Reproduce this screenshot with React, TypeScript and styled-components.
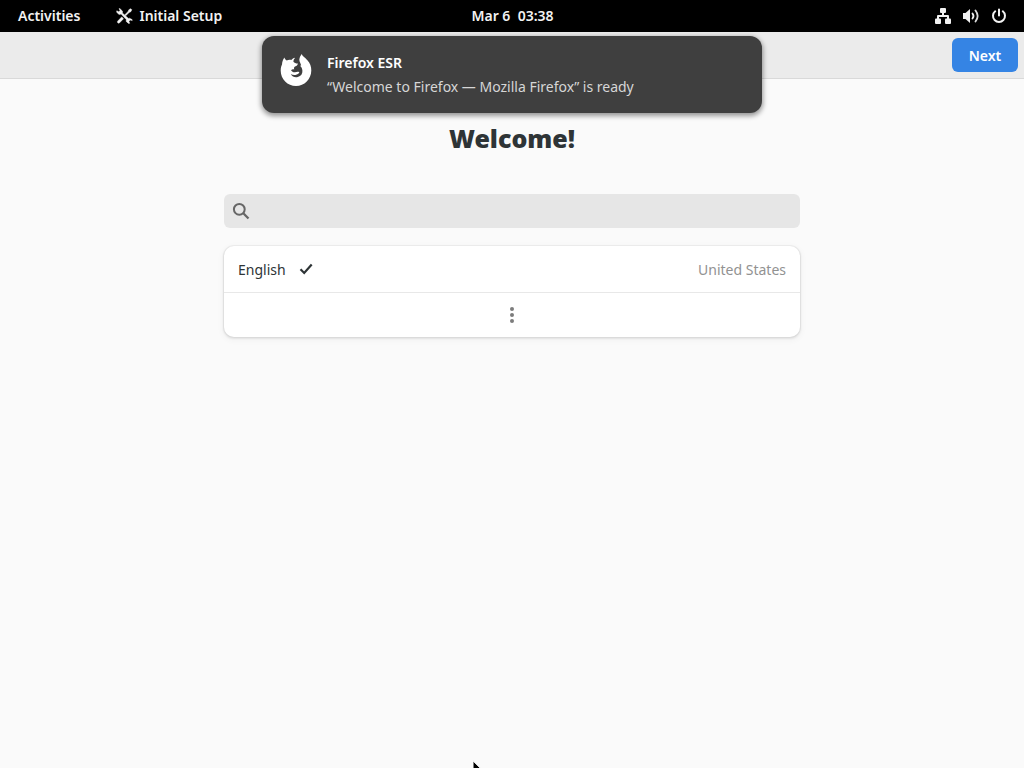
import React from "react";
import styled, { createGlobalStyle } from "styled-components";

const GlobalStyle = createGlobalStyle`
  *, *::before, *::after { box-sizing: border-box; }
  body {
    margin: 0;
    background: #fafafa;
    color: #2e3436;
    font-family: "Noto Sans", "Open Sans", sans-serif;
    font-size: 14px;
    line-height: 20px;
    overflow: hidden;
  }
  button, input { font: inherit; color: inherit; }
`;

const Desktop = styled.div`
  position: relative;
  min-height: 100vh;
  overflow: hidden;
`;

const TopBar = styled.nav`
  display: grid;
  grid-template-columns: 1fr auto 1fr;
  align-items: center;
  height: 32px;
  padding: 0 5px 0 6px;
  background: #000;
  color: #f2f2f2;
`;

const BarGroup = styled.div<{ $end?: boolean }>`
  display: flex;
  gap: 12px;
  justify-content: ${(p) => (p.$end ? "flex-end" : "flex-start")};
`;

const BarButton = styled.button<{ $gap?: number }>`
  display: flex;
  align-items: center;
  gap: ${(p) => p.$gap ?? 6}px;
  height: 32px;
  padding: 0 12px;
  border: 0;
  background: transparent;
  font-weight: 600;
  white-space: pre;
`;

const HeaderBar = styled.header`
  display: flex;
  justify-content: flex-end;
  align-items: center;
  height: 47px;
  padding: 0 6px;
  background: #ebebeb;
  border-bottom: 1px solid #d9d9d9;
`;

const NextButton = styled.button`
  width: 66px;
  height: 34px;
  padding: 2px 0 0;
  border: 0;
  border-radius: 6px;
  background: #3584e4;
  color: #fff;
  font-weight: 600;
`;

const Content = styled.main`
  display: flex;
  flex-direction: column;
  width: 100%;
  max-width: 600px;
  margin: 0 auto;
  padding: 40px 12px;
`;

const Title = styled.h1`
  margin: 0 0 36px;
  font-size: 25px;
  line-height: 39px;
  font-weight: 900;
  text-align: center;
`;

const SearchBox = styled.label`
  display: flex;
  align-items: center;
  gap: 8px;
  height: 34px;
  margin-bottom: 18px;
  padding: 0 8px;
  border-radius: 6px;
  background: #e6e6e6;
  color: #666;
`;

const SearchInput = styled.input`
  flex: 1;
  min-width: 0;
  border: 0;
  outline: 0;
  background: transparent;
`;

const LanguageList = styled.ul`
  margin: 0;
  padding: 0;
  list-style: none;
  border-radius: 10px;
  background: #fff;
  box-shadow: 0 0 0 1px rgba(0, 0, 0, 0.03), 0 1px 2px 1px rgba(0, 0, 0, 0.07),
    0 2px 6px 2px rgba(0, 0, 0, 0.03);
`;

const LanguageItem = styled.li`
  & + & { border-top: 1px solid #e8e8e8; }
`;

const RowButton = styled.button<{ $center?: boolean }>`
  display: flex;
  align-items: center;
  justify-content: ${(p) => (p.$center ? "center" : "flex-start")};
  gap: 12px;
  width: 100%;
  height: ${(p) => (p.$center ? 44 : 46)}px;
  padding: ${(p) => (p.$center ? "0 14px" : "2px 14px 0")};
  border: 0;
  background: transparent;
`;

const Country = styled.span`
  margin-left: auto;
  color: #929292;
`;

const Notification = styled.section`
  position: absolute;
  top: 36px;
  left: 50%;
  transform: translateX(-50%);
  display: flex;
  align-items: flex-start;
  gap: 15px;
  width: 500px;
  max-width: 100%;
  height: 77px;
  padding: 17px 18px;
  border-radius: 12px;
  background: #3f3f3f;
  color: #d6d6d6;
  box-shadow: 0 2px 5px 1px rgba(0, 0, 0, 0.4);
`;

const NotificationTitle = styled.h2`
  margin: 0 0 4px;
  font-size: 14px;
  line-height: 20px;
  font-weight: 600;
  color: #fff;
`;

const NotificationBody = styled.p`
  margin: 0;
`;

const Pointer = styled.svg`
  position: absolute;
  left: 472px;
  top: 760px;
`;

const ToolsIcon = () => (
  <svg width="17" height="16" viewBox="0 0 16 16" fill="currentColor" stroke="currentColor" strokeWidth=".5" aria-hidden="true">
    <path d="M3.2.4 5.9 3v2l6 5.400 1-.2 2.700 1.400.1 1-2-.6-1.300 1.400.8 1.900-1.100.1-2.400-2 .1-1.900L4.600 6.100l-2 .4L.2 4.300l.1-1.500 2 1L3.600 2.600 2.500.7z" />
    <path d="M14.200.7l1.100 1-1 2-1.700.8-3.400 3.300-1-.9 3.400-3.400.8-1.800z" />
    <path d="M5.200 8.900 7 10.700l-3.900 4.100c-1.200 1.200-3-.7-1.800-1.800z" />
  </svg>
);

const NetworkIcon = () => (
  <svg width="16" height="16" viewBox="0 0 16 16" fill="currentColor" aria-hidden="true">
    <rect x="5" y="0" width="6" height="5" rx="1" />
    <path d="M7 4.500h2V7h4a1 1 0 0 1 1 1v3h-2V9H4v2H2V8a1 1 0 0 1 1-1h4z" />
    <rect x="0" y="10.500" width="6" height="5.500" rx="1" />
    <rect x="10" y="10.500" width="6" height="5.500" rx="1" />
  </svg>
);

const VolumeIcon = () => (
  <svg width="16" height="16" viewBox="0 0 16 16" fill="none" stroke="currentColor" aria-hidden="true">
    <path d="M0 5h2.500L7 1v14l-4.500-4H0z" fill="currentColor" stroke="none" />
    <path d="M9.500 5.500q2 2.500 0 5" strokeWidth="1.800" strokeLinecap="round" />
    <path d="M12.500 2.500q4.300 5.500 0 11" strokeWidth="1.800" strokeLinecap="round" opacity=".9" />
  </svg>
);

const PowerIcon = () => (
  <svg width="16" height="16" viewBox="0 0 16 16" fill="none" stroke="currentColor" strokeWidth="2" strokeLinecap="round" aria-hidden="true">
    <path d="M8 1.500v6M4.200 3.300a6 6 0 1 0 7.600 0" />
  </svg>
);

const SearchIcon = () => (
  <svg width="18" height="18" viewBox="0 0 18 18" fill="none" stroke="currentColor" strokeWidth="2" aria-hidden="true">
    <circle cx="7.300" cy="7.300" r="5.400" />
    <path d="m11.300 11.300 5.200 5.200" strokeWidth="2.300" />
  </svg>
);

const CheckIcon = () => (
  <svg width="16" height="16" viewBox="0 0 16 16" fill="none" stroke="currentColor" strokeWidth="2.200" aria-hidden="true">
    <path d="m2.500 7.300 3.700 3.700L13.700 2.500" />
  </svg>
);

const MoreIcon = () => (
  <svg width="16" height="18" viewBox="0 0 16 18" fill="#7c7c7c" aria-hidden="true">
    <circle cx="8" cy="3" r="2" />
    <circle cx="8" cy="9" r="2" />
    <circle cx="8" cy="15" r="2" />
  </svg>
);

const FirefoxIcon = () => (
  <svg width="32" height="34" viewBox="0 0 32 34" fill="#fff" aria-hidden="true">
    <path d="M21.800 1c.9 2.800 3 3 5.600 6.200 2.700 3 4 6.300 3.900 10.200C31.200 26 24.400 33 16 33S.7 26.200.7 17.700c0-3.200.8-5 1.300-6.200.2-2.600.9-5 2.500-6.900.2 1.300.9 2.200 2.200 2.900 1.500-.7 3.300-.8 4.600-.4 1-1.200 2.300-2 3.800-2.300-1 1.100-1.700 2.500-1.700 4 1 1.200 2.300 1.700 4.500 1.800-.2 1.900-1.800 2.600-3.600 3.500-.4.900-.4 1.700-.1 2.500-1-.5-2.400-.3-3.200.8 1 .8 2 2 4 1.900 1.300-.1 2.600-1.300 4.400-.1-.6 1.400-2 2.400-4 2.700-1.600.3-3.200-.1-4.600-.9 1.500 2.800 4.200 3.600 7 2.900 3.300-.8 4.800-3.200 4.600-6.200-.1-2.200-1-3.700-2.500-5.200l1.300.3c-.3-2.300-1.700-3.500-1.900-6C19.600 4.200 20.500 2.500 21.800 1z" />
  </svg>
);

export default function App() {
  return (
    <Desktop>
      <GlobalStyle />
      <TopBar>
        <BarGroup>
          <BarButton type="button">Activities</BarButton>
          <BarButton type="button">
            <ToolsIcon />
            Initial Setup
          </BarButton>
        </BarGroup>
        <BarButton type="button">{"Mar 6  03:38"}</BarButton>
        <BarGroup $end>
          <BarButton type="button" $gap={12} aria-label="System menu">
            <NetworkIcon />
            <VolumeIcon />
            <PowerIcon />
          </BarButton>
        </BarGroup>
      </TopBar>
      <HeaderBar>
        <NextButton type="button">Next</NextButton>
      </HeaderBar>
      <Content>
        <Title>Welcome!</Title>
        <SearchBox>
          <SearchIcon />
          <SearchInput type="text" aria-label="Search languages" />
        </SearchBox>
        <LanguageList>
          <LanguageItem>
            <RowButton type="button">
              English
              <CheckIcon />
              <Country>United States</Country>
            </RowButton>
          </LanguageItem>
          <LanguageItem>
            <RowButton type="button" $center aria-label="More languages">
              <MoreIcon />
            </RowButton>
          </LanguageItem>
        </LanguageList>
      </Content>
      <Notification role="status">
        <FirefoxIcon />
        <div>
          <NotificationTitle>Firefox ESR</NotificationTitle>
          <NotificationBody>“Welcome to Firefox — Mozilla Firefox” is ready</NotificationBody>
        </div>
      </Notification>
      <Pointer width="14" height="20" viewBox="0 0 14 20" aria-hidden="true">
        <path d="M1 .8v15l3.500-3.300 2.400 5.300 2.300-1-2.400-5.200h5z" fill="#000" stroke="#fff" strokeWidth="1" />
      </Pointer>
    </Desktop>
  );
}
